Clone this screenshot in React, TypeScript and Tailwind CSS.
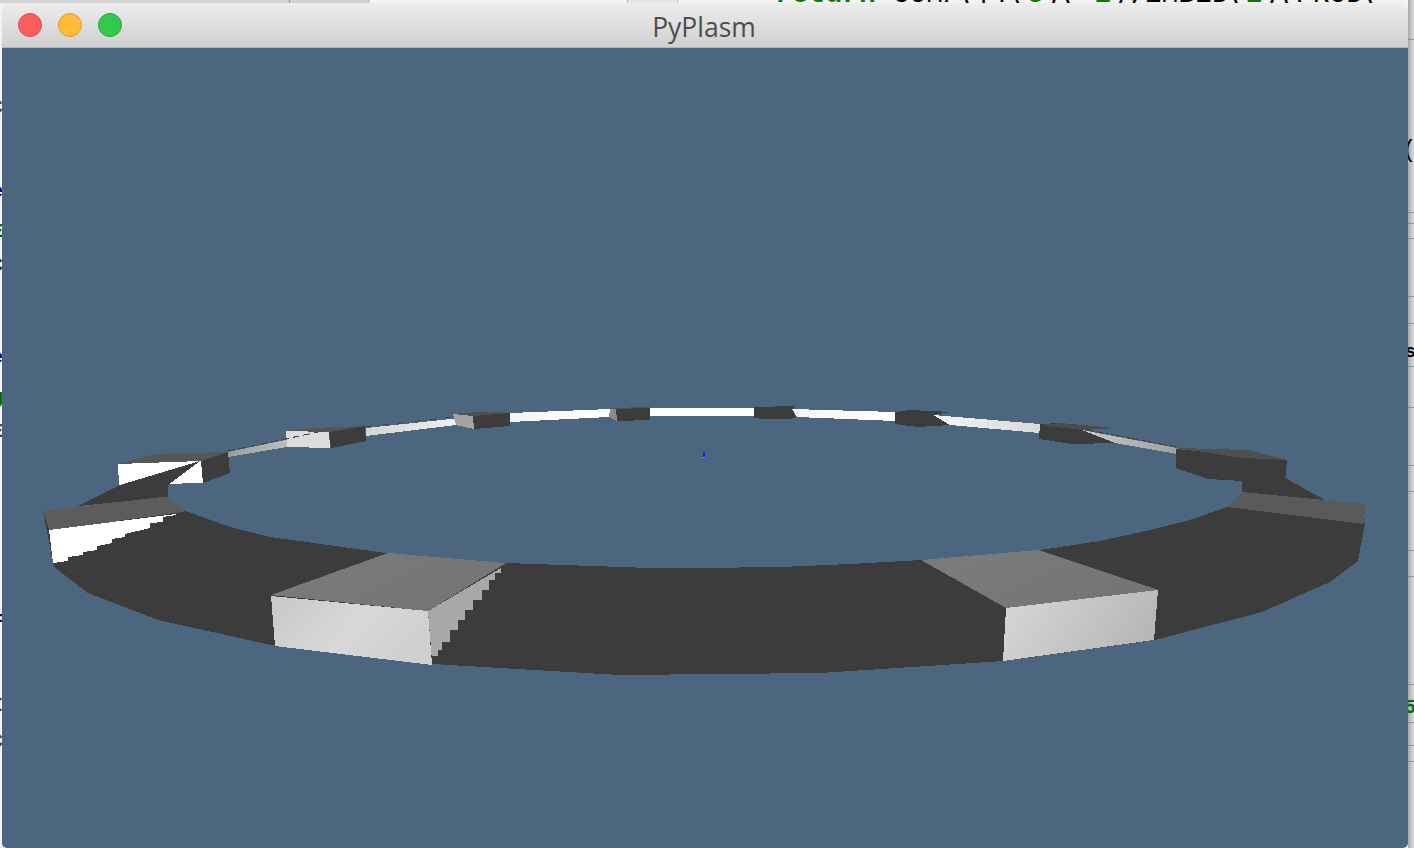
const BG = "#4c6680";
const DARK = "#3c3c3c";

const edgeLinesRight = [39, 212, 223, 238, 296, 323, 366, 407, 465, 491, 550, 576, 684, 722, 745, 761];

const edgeGlyphs = [
  { y: 108, t: "C", c: "text-[#555555]" },
  { y: 192, t: "e", c: "text-[#000080]" },
  { y: 232, t: "E", c: "text-[#006400]" },
  { y: 266, t: "C", c: "text-[#333333]" },
  { y: 358, t: "e", c: "text-[#000080]" },
  { y: 398, t: "g", c: "text-[#006400]" },
  { y: 432, t: "E", c: "text-[#444444]" },
  { y: 620, t: "=", c: "text-[#000080]" },
  { y: 706, t: "I", c: "text-[#5a3a2a]" },
  { y: 742, t: "C", c: "text-[#444444]" },
];

function Scene() {
  return (
    <svg viewBox="2 48 1406 800" className="block w-full h-full" shapeRendering="crispEdges">
      <defs>
        <linearGradient id="frontC" x1="0" y1="0" x2="1" y2="0.4">
          <stop offset="0" stopColor="#c8c8c8" />
          <stop offset="0.6" stopColor="#d8d8d8" />
          <stop offset="1" stopColor="#d0d0d0" />
        </linearGradient>
        <linearGradient id="frontD" x1="0" y1="0" x2="1" y2="0.3">
          <stop offset="0" stopColor="#d8d8d8" />
          <stop offset="1" stopColor="#b8b8b8" />
        </linearGradient>
        <linearGradient id="topC" x1="0" y1="0" x2="1" y2="0.5">
          <stop offset="0" stopColor="#7c7c7c" />
          <stop offset="1" stopColor="#747474" />
        </linearGradient>
        <linearGradient id="stripA" x1="0" y1="0" x2="1" y2="0">
          <stop offset="0" stopColor="#9c9c9c" />
          <stop offset="1" stopColor="#d0d0d0" />
        </linearGradient>
        <linearGradient id="stripB" x1="0" y1="0" x2="1" y2="0">
          <stop offset="0" stopColor="#d4d4d4" />
          <stop offset="1" stopColor="#f4f4f4" />
        </linearGradient>
        <linearGradient id="stripC" x1="0" y1="0" x2="1" y2="0">
          <stop offset="0" stopColor="#f4f4f4" />
          <stop offset="1" stopColor="#ffffff" />
        </linearGradient>
        <linearGradient id="stripD" x1="0" y1="0" x2="1" y2="0">
          <stop offset="0" stopColor="#f6f6f6" />
          <stop offset="1" stopColor="#d8d8d8" />
        </linearGradient>
        <linearGradient id="stripE" x1="0" y1="0" x2="1" y2="0">
          <stop offset="0" stopColor="#c8c8c8" />
          <stop offset="1" stopColor="#a0a0a0" />
        </linearGradient>
      </defs>

      {/* back ring: strips */}
      <polygon points="228,452 323,432 287,447 228,457" fill="url(#stripA)" />
      <polygon points="286,431 329,432 330,448 287,447" fill="#dcdcdc" />
      <polygon points="366,428 470,417 456,425 366,436" fill="url(#stripB)" />
      <polygon points="510,413 610,409 609,417 510,422" fill="url(#stripC)" />
      <polygon points="650,408 754,408 754,416 650,416" fill="#ffffff" />
      <polygon points="792,409 895,412 895,421 797,417" fill="url(#stripC)" />
      <polygon points="933,415 1040,424 1040,433 950,425" fill="url(#stripD)" />
      <polygon points="1082,430 1177,448 1177,454 1115,443" fill="url(#stripE)" />

      {/* back boxes */}
      <polygon points="286,431 312,428 365,426 329,432" fill="#555555" />
      <polygon points="329,432 365,426 366,441 331,448" fill={DARK} />
      <polygon points="453,414 473,416 474,429 456,425" fill="#a4a4a4" />
      <polygon points="453,414 478,412 500,412 510,413 473,416" fill="#505050" />
      <polygon points="473,416 510,413 510,426 474,429" fill={DARK} />
      <polygon points="610,409 616,409 617,421 609,417" fill="#8a8a8a" />
      <polygon points="610,408 650,407 650,408 616,409" fill="#505050" />
      <polygon points="616,409 650,408 650,420 617,421" fill={DARK} />
      <polygon points="754,407 796,406 792,409 796,417 790,419 763,419 754,418" fill={DARK} />
      <polygon points="895,412 910,410 951,412 933,415 950,425 918,427 895,424" fill={DARK} />
      <polygon points="1040,424 1060,423 1117,428 1082,430 1115,443 1072,444 1039,439" fill={DARK} />
      <polygon points="1060,423 1117,428 1082,430 1040,425" fill="#4c4c4c" />

      {/* dashes on strips */}
      <polyline points="228,451 323,431" fill="none" stroke="#444444" strokeWidth="1" strokeDasharray="7 4" />
      <polyline points="366,427 453,417" fill="none" stroke="#444444" strokeWidth="1" strokeDasharray="6 10" />
      <polyline points="1082,429 1177,447" fill="none" stroke="#444444" strokeWidth="1" strokeDasharray="12 3" />

      {/* box A */}
      <polygon points="118,464 201,461 203,483 119,485" fill="#ffffff" />
      <polygon points="118,464 155,454 228,452 201,461" fill="#565656" />
      <polygon points="201,461 228,452 230,473 203,483" fill={DARK} />
      <polygon points="78,506 120,485 150,476 200,461 168,485 168,497" fill={DARK} />

      {/* box F + back ring right */}
      <polygon points="1242,478 1285,478 1327,501 1366,520 1242,494" fill={DARK} />
      <polygon points="1176,449 1287,460 1285,481 1242,481 1208,479 1176,468" fill={DARK} />
      <polygon points="1177,448 1249,450 1287,460 1243,458" fill="#505050" />

      {/* main dark ring */}
      <polygon
        points="53,563 54,567 88,593 158,620 271,645 432,664 620,675 820,673 1004,661 1155,640 1262,612 1330,582 1358,561 1365,523 1340,505 1227,507 1190,520 1150,530 1100,541 1040,550 922,560 850,564 780,567 700,568 650,568 505,563 386,553 270,537 230,527 186,511 120,520 60,540"
        fill={DARK}
      />

      {/* box B */}
      <polygon points="43,511 49,530 53,563 48,536" fill={DARK} />
      <polygon
        points="49,530 176,514 176,515 163,517 163,522 150,523 150,528 125,534 125,537 112,539 112,543 97,546 97,550 83,552 83,555 68,557 68,561 53,563"
        fill="#ffffff"
      />
      <polygon points="43,511 162,497 168,497 187,511 176,513 49,530" fill="#5c5c5c" />

      {/* box C */}
      <polygon
        points="428,611 501,568 501,573 495,573 495,580 489,580 489,590 482,590 482,600 473,600 473,610 465,610 465,620 458,620 458,630 450,630 450,642 442,642 442,650 438,650 438,656 432,656 432,661"
        fill="#a8a8a8"
      />
      <polygon points="271,596 428,611 432,665 275,646" fill="url(#frontC)" />
      <polygon points="271,595 388,553 506,563 428,611" fill="url(#topC)" />

      {/* box D */}
      <polygon points="1006,608 1158,590 1154,640 1003,661" fill="url(#frontD)" />
      <polygon points="921,560 1039,550 1158,590 1006,608" fill="url(#topC)" />

      {/* box E */}
      <polygon points="1242,492 1366,504 1363,524 1227,507" fill="#5a5a5a" />

      {/* axes */}
      <rect x="703" y="452" width="2" height="5" fill="#1a1aee" />
      <rect x="701" y="457" width="4" height="1" fill="#18cc18" />
      <rect x="702" y="458" width="1" height="0.5" fill={BG} />
    </svg>
  );
}

export default function App() {
  return (
    <div className="relative w-[1414px] h-[848px] overflow-hidden bg-[#f2f2f2] pl-[2px] pr-[6px] pt-[3px] flex flex-col font-['Liberation_Sans',sans-serif]">
      {/* desktop content behind the window */}
      <div className="absolute left-0 right-0 top-0 h-[3px] flex">
        <div className="w-[290px] bg-[#d4d4d4] border-r border-[#999999]" />
        <div className="w-[80px] bg-[#cfcfcf]" />
        <div className="w-[258px] bg-[#f4f4f4] border-r border-[#bbbbbb]" />
        <div className="w-[50px] bg-[#e8e8e8] border-r border-[#bbbbbb]" />
      </div>
      <div className="absolute left-[775px] top-[-21px] whitespace-nowrap text-[28px] leading-[32px] font-['Liberation_Mono',monospace]">
        <span className="font-bold text-[#0a7a0a]">return</span>
        <span className="text-black"> COMP([T(</span>
        <span className="text-[#0a7a0a]">3</span>
        <span className="text-black">)(</span>
        <span className="text-[#a020f0]">-</span>
        <span className="text-[#0a7a0a]">1</span>
        <span className="text-black">),EMBED(</span>
        <span className="text-[#0a7a0a]">1</span>
        <span className="text-black">)(PROD(</span>
      </div>
      <div className="absolute right-0 top-0 bottom-0 w-[6px] bg-gradient-to-r from-[#a8a8a8] to-[#dcdcdc]" />
      {edgeLinesRight.map((y) => (
        <div key={y} className="absolute right-0 w-[6px] h-px bg-[#8f8f8f]" style={{ top: y }} />
      ))}
      <div className="absolute left-[1402px] top-[138px] text-[24px] leading-[26px] text-black font-['Liberation_Mono',monospace]">(</div>
      <div className="absolute left-[1405px] top-[342px] text-[18px] leading-[20px] font-bold text-black font-['Liberation_Mono',monospace]">s</div>
      <div className="absolute left-[1404px] top-[697px] text-[20px] leading-[22px] font-bold text-[#0a6a0a] font-['Liberation_Mono',monospace]">5</div>
      {edgeGlyphs.map((g) => (
        <div
          key={g.y}
          className={`absolute left-[-9px] text-[20px] leading-[20px] font-bold font-['Liberation_Mono',monospace] ${g.c}`}
          style={{ top: g.y - 10 }}
        >
          {g.t}
        </div>
      ))}

      {/* window */}
      <div className="relative flex-1 min-h-0 flex flex-col rounded-t-[8px] rounded-b-[5px] overflow-hidden">
        <div className="relative h-[45px] shrink-0 flex items-center bg-gradient-to-b from-[#ededed] to-[#d0d0d0] border-b border-[#b4b4b4] rounded-t-[8px]">
          <div className="flex gap-4 pl-4">
            <div className="w-6 h-6 rounded-full bg-[#fc5d5d] border border-[#e0484a]" />
            <div className="w-6 h-6 rounded-full bg-[#febc37] border border-[#e0a028]" />
            <div className="w-6 h-6 rounded-full bg-[#32c94e] border border-[#22a83a]" />
          </div>
          <div className="absolute inset-0 pt-[5px] pr-[2px] flex items-center justify-center text-[26.5px] text-[#4d4d4d] font-['Open_Sans',sans-serif]">
            PyPlasm
          </div>
        </div>
        <div className="flex-1 min-h-0 bg-[#4c6680]">
          <Scene />
        </div>
      </div>
    </div>
  );
}
